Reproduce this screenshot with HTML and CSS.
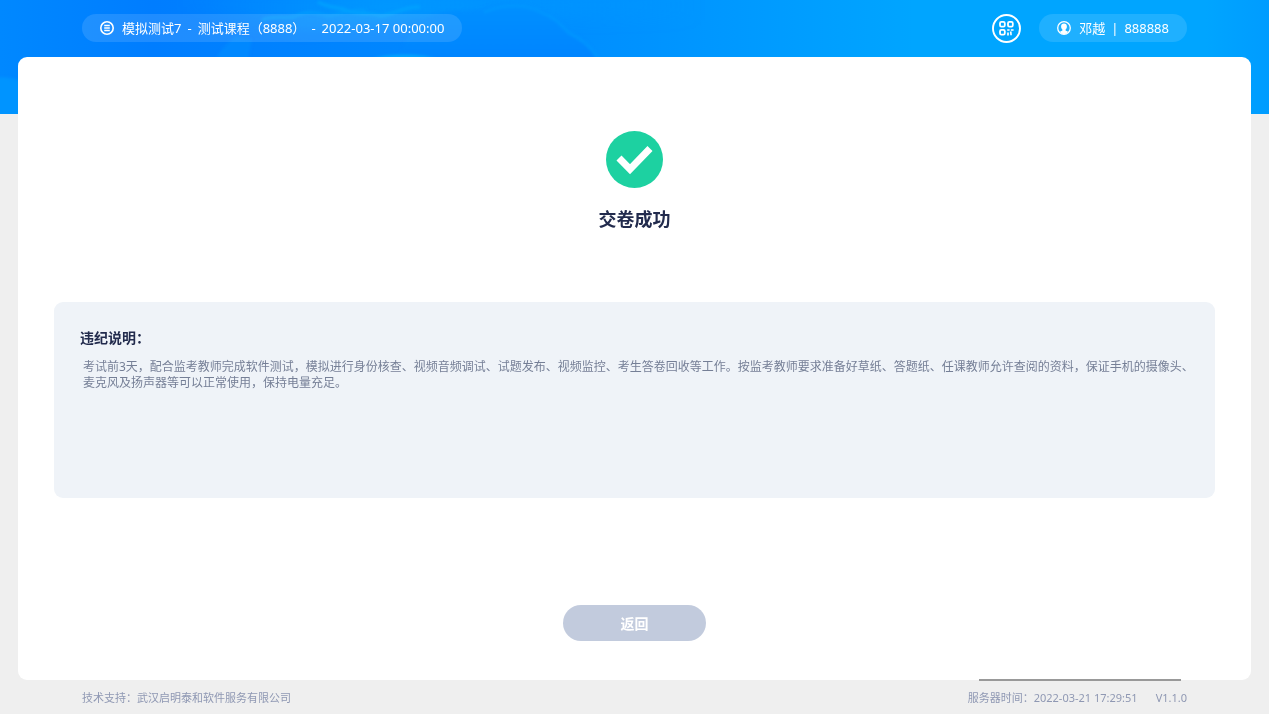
FILE: index.html
```html
<!DOCTYPE html>
<html lang="zh-CN">
<head>
    <meta charset="UTF-8">
    <meta name="viewport" content="width=device-width, initial-scale=1.0">
    <title>交卷成功</title>
    <link rel="stylesheet" href="styles.css">
</head>
<body>
    <svg class="sky" viewBox="0 0 1269 114" preserveAspectRatio="none" aria-hidden="true">
        <defs>
            <linearGradient id="base" x1="0" y1="0" x2="1" y2="0">
                <stop offset="0" stop-color="#0088ff"/>
                <stop offset=".12" stop-color="#007dff"/>
                <stop offset=".35" stop-color="#0088ff"/>
                <stop offset=".5" stop-color="#0092ff"/>
                <stop offset=".72" stop-color="#00a5ff"/>
                <stop offset=".95" stop-color="#00a5ff"/>
                <stop offset="1" stop-color="#009cff"/>
            </linearGradient>
            <linearGradient id="haze" x1="0" y1="0" x2="1" y2="0">
                <stop offset="0" stop-color="#009cff" stop-opacity="0"/>
                <stop offset=".4" stop-color="#009cff" stop-opacity=".8"/>
                <stop offset="1" stop-color="#009cff" stop-opacity="0"/>
            </linearGradient>
            <linearGradient id="puff" x1="0" y1="0" x2="0" y2="1">
                <stop offset="0" stop-color="#0090ff"/>
                <stop offset="1" stop-color="#0084ff"/>
            </linearGradient>
            <filter id="soft" x="-10%" y="-30%" width="120%" height="160%">
                <feGaussianBlur stdDeviation="1.5"/>
            </filter>
            <filter id="wide" x="-20%" y="-50%" width="140%" height="200%">
                <feGaussianBlur stdDeviation="7"/>
            </filter>
        </defs>
        <rect width="1269" height="114" fill="url(#base)"/>
        <path d="M180-10h520v30H420L300 30 180 10z" fill="url(#haze)" filter="url(#wide)"/>
        <g filter="url(#soft)">
            <path d="M400 60c4-26 18-42 46-48 14-2 26 0 38-4 20-8 42-7 56 2 12 2 22 12 30 22 14 6 22 14 30 28z" fill="url(#puff)"/>
            <path d="M484 12c24-10 46-7 58 1 12 3 20 13 27 20 14 7 22 14 29 26" fill="none" stroke="#009aff" stroke-width="2"/>
            <path d="M262 20c14-6 22 0 34-4 12-6 22-3 32 0 16-2 24-8 38-6" fill="none" stroke="#009bff" stroke-width="3"/>
            <path d="M318 2c12 7 22 4 30 9 10 5 22 0 32 5 16-2 24-10 40-9" fill="none" stroke="#00a2ff" stroke-width="3"/>
            <path d="M216 60c4-12 14-18 20-24l16 4-4 20z" fill="#008eff" opacity=".6"/>
            <path d="M370 60c14-7 54-7 68 0z" fill="#00a5ff"/>
            <path d="M-4 78c10-2 20 1 28 4v36H-4z" fill="#0097ff" opacity=".8"/>
        </g>
    </svg>
    <header class="header">
        <div class="pill">
            <svg class="icon" viewBox="0 0 14 14" fill="none" stroke="#fff" aria-hidden="true">
                <circle cx="7" cy="7" r="6.2" stroke-width="1.6"/>
                <path d="M4.2 4.5h5.6M4.2 7h5.6M4.2 9.5h5.6" stroke-width="1.3"/>
            </svg>
            <span>模拟测试7</span>
            <span>-</span>
            <span>测试课程（8888）</span>
            <span>-</span>
            <span>2022-03-17 00:00:00</span>
        </div>
        <div class="right">
            <button class="qr" type="button" aria-label="二维码">
                <svg viewBox="0 0 29 29" fill="none" stroke="#fff" aria-hidden="true">
                    <circle cx="14.5" cy="14.5" r="13.5" stroke-width="1.9"/>
                    <g stroke-width="1.8">
                        <rect x="8" y="7.8" width="4.8" height="4.8" rx="1.4"/>
                        <rect x="16" y="7.8" width="4.8" height="4.8" rx="1.4"/>
                        <rect x="8" y="15.8" width="4.8" height="4.8" rx="1.4"/>
                    </g>
                    <path d="M15.2 16h2.4M18.8 16h2.8M16 18.4v3M18.8 17.4v2M18.2 20.4h1.6" stroke-width="1.7"/>
                </svg>
            </button>
            <div class="pill">
                <svg class="icon" viewBox="0 0 14 14" aria-hidden="true">
                    <circle cx="7" cy="7" r="6.3" fill="none" stroke="#fff" stroke-width="1.3"/>
                    <path d="M7 2.4c1.9 0 2.9 1.3 2.9 3 0 1.3-.5 2.4-1.3 3v1c.4.4 1.400.5 2.3 1C10 12.200 8.700 13 7 13s-3-.8-3.900-2.600c.9-.5 1.900-.6 2.300-1v-1C4.600 7.800 4.100 6.700 4.100 5.400c0-1.700 1-3 2.900-3z" fill="#fff"/>
                </svg>
                <span>邓越</span>
                <span>|</span>
                <span>888888</span>
            </div>
        </div>
    </header>
    <main class="card">
        <svg class="success" viewBox="0 0 57 57" aria-hidden="true">
            <circle cx="28.5" cy="28.5" r="28.5" fill="#1dd1a1"/>
            <path d="M13 27l11 11.3 20-20.8" fill="none" stroke="#fff" stroke-width="7"/>
        </svg>
        <h1>交卷成功</h1>
        <section class="notice">
            <h2>违纪说明：</h2>
            <p>考试前3天，配合监考教师完成软件测试，模拟进行身份核查、视频音频调试、试题发布、视频监控、考生答卷回收等工作。按监考教师要求准备好草纸、答题纸、任课教师允许查阅的资料，保证手机的摄像头、麦克风及扬声器等可以正常使用，保持电量充足。</p>
        </section>
        <button class="back" type="button">返回</button>
    </main>
    <footer class="footer">
        <span>技术支持：武汉启明泰和软件服务有限公司</span>
        <div class="status">
            <span>服务器时间：2022-03-21 17:29:51</span>
            <span>V1.1.0</span>
        </div>
    </footer>
</body>
</html>
```
FILE: styles.css
```css
* {
    box-sizing: border-box;
}
body {
    display: flex;
    flex-direction: column;
    min-height: 100vh;
    margin: 0;
    background: #efefef;
    font-family: "Noto Sans", "Noto Sans CJK SC", sans-serif;
    font-size: 12px;
}
h1, h2, p {
    margin: 0;
}
.sky {
    position: absolute;
    top: 0;
    left: 0;
    z-index: -1;
    width: 100%;
    height: 114px;
}
.header {
    display: flex;
    justify-content: space-between;
    align-items: center;
    height: 57px;
    padding: 0 82px 1px;
    color: #fff;
    font-size: 13px;
    line-height: 18px;
}
.right {
    display: flex;
    align-items: center;
    gap: 18px;
}
.pill {
    display: flex;
    align-items: center;
    gap: 6px;
    height: 28px;
    padding: 0 18px;
    border-radius: 14px;
    background: rgba(255, 255, 255, 0.12);
    white-space: nowrap;
}
.icon {
    width: 14px;
    height: 14px;
    margin-right: 2px;
}
.qr {
    width: 29px;
    height: 29px;
    padding: 0;
    border: 0;
    background: none;
    cursor: pointer;
}
.qr svg {
    display: block;
}
.card {
    display: flex;
    flex: 1;
    flex-direction: column;
    align-items: center;
    margin: 0 18px;
    padding: 74px 36px 39px;
    border-radius: 9px;
    background: #fff;
}
.success {
    width: 57px;
    height: 57px;
}
h1 {
    margin-top: 18px;
    color: #222b4d;
    font-size: 18px;
    line-height: 26px;
}
.notice {
    width: 100%;
    min-height: 196px;
    margin-top: 70px;
    padding: 26px 16px 26px 26px;
    border-radius: 9px;
    background: #eff3f8;
}
h2 {
    color: #222b4d;
    font-size: 14px;
    line-height: 20px;
}
.notice p {
    margin-top: 11px;
    padding: 0 3px;
    color: #757f96;
    line-height: 16px;
}
.back {
    width: 143px;
    height: 36px;
    margin-top: auto;
    border: 0;
    border-radius: 18px;
    background: #c2cbdd;
    color: #fff;
    font-family: inherit;
    font-size: 14px;
    font-weight: bold;
    cursor: pointer;
}
.footer {
    position: relative;
    display: flex;
    justify-content: space-between;
    align-items: center;
    height: 34px;
    padding: 0 82px;
    color: #8f98b3;
    font-size: 11px;
}
.footer::before {
    content: "";
    position: absolute;
    top: -1px;
    right: 88px;
    width: 202px;
    height: 2px;
    background: #999;
}
.status {
    display: flex;
    align-items: baseline;
    gap: 18px;
}
```
